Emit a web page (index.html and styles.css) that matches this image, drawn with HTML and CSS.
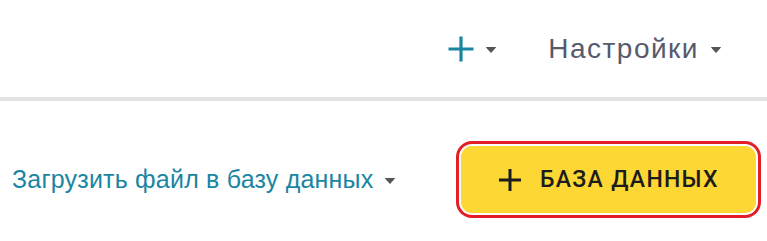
FILE: index.html
```html
<!DOCTYPE html>
<html lang="ru">
<head>
<meta charset="utf-8">
<link rel="stylesheet" href="styles.css">
</head>
<body>
<header class="header">
  <div class="menu-item add-menu">
    <svg class="plus-icon" width="26" height="26" viewBox="0 0 26 26"><path d="M13 0.5V25.5M0.5 13H25.5" stroke="#1a85a0" stroke-width="3.2" fill="none"/></svg>
    <svg class="caret" width="10" height="6" viewBox="0 0 10 6"><path d="M0.5 0.5H9.5L5 5.5Z" fill="#555" stroke="#555" stroke-linejoin="round"/></svg>
  </div>
  <div class="menu-item settings">
    <span class="settings-label">Настройки</span>
    <svg class="caret" width="10" height="6" viewBox="0 0 10 6"><path d="M0.5 0.5H9.5L5 5.5Z" fill="#555" stroke="#555" stroke-linejoin="round"/></svg>
  </div>
</header>
<div class="divider"></div>
<main class="toolbar">
  <a class="upload-link" href="#">
    <span>Загрузить файл в базу данных</span>
    <svg class="caret" width="10" height="6" viewBox="0 0 10 6"><path d="M0.5 0.5H9.5L5 5.5Z" fill="#555" stroke="#555" stroke-linejoin="round"/></svg>
  </a>
  <button class="db-button">
    <svg class="btn-plus" width="22" height="22" viewBox="0 0 22 22"><path d="M11 0V22M0 11H22" stroke="#1c1c1c" stroke-width="3" fill="none"/></svg>
    <span class="btn-label">БАЗА ДАННЫХ</span>
  </button>
</main>
</body>
</html>
```
FILE: styles.css
```css
html, body {
  margin: 0;
  padding: 0;
  background: #fff;
}
body {
  width: 767px;
  height: 241px;
  overflow: hidden;
  font-family: "Liberation Sans", Arial, sans-serif;
}
.header {
  height: 97px;
  display: flex;
  justify-content: flex-end;
  align-items: center;
  padding-right: 46px;
  box-sizing: border-box;
  gap: 52px;
}
.menu-item {
  display: flex;
  align-items: center;
  gap: 12px;
}
.add-menu {
  padding-top: 1px;
}
.settings-label {
  font-size: 28px;
  color: #565a6b;
  letter-spacing: 1.5px;
}
.caret {
  display: block;
  margin-top: 2px;
}
.divider {
  height: 4px;
  background: #e2e2e2;
}
.toolbar {
  display: flex;
  justify-content: space-between;
  align-items: center;
  padding: 45px 11px 0 12px;
}
.upload-link {
  display: flex;
  align-items: center;
  gap: 12px;
  text-decoration: none;
  color: #1b86a2;
  font-size: 25px;
  letter-spacing: 0.2px;
}
.db-button {
  display: flex;
  align-items: center;
  gap: 19px;
  width: 295px;
  height: 67px;
  padding: 0 0 0 38px;
  box-sizing: border-box;
  border: none;
  border-radius: 11px;
  background: #fdd733;
  box-shadow: 0 0 0 2px #fff, 0 0 0 5px #e41e26;
  font-family: Roboto, "Liberation Sans", Arial, sans-serif;
  font-size: 23px;
  font-weight: 500;
  letter-spacing: 1.3px;
  color: #1c1c1c;
}
.btn-plus {
  flex: none;
}
.btn-label {
  white-space: nowrap;
}
```
